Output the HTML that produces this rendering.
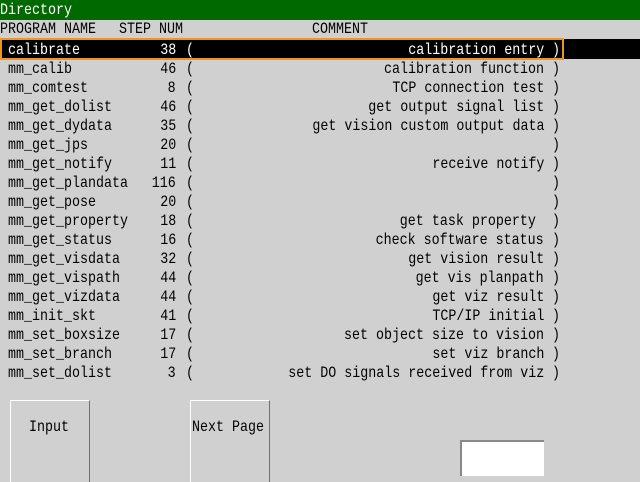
<!DOCTYPE html>
<html><head><meta charset="utf-8"><style>
body{margin:0;width:640px;height:480px;background:#d0d0d0;position:relative;overflow:hidden;font-family:"Liberation Mono",monospace;}
.r{position:absolute;left:0;width:640px;height:19px;font-size:16px;line-height:19px;}
.r span{position:absolute;top:1px;white-space:pre;}
.l{transform:scaleX(0.8333);transform-origin:0 0;}
.n{right:464px;transform:scaleX(0.8333);transform-origin:100% 0;}
.p{left:186px;transform:scaleX(0.8333);transform-origin:0 0;}
.c{right:96px;transform:scaleX(0.8333);transform-origin:100% 0;}
.q{left:552px;transform:scaleX(0.8333);transform-origin:0 0;}
.nm{left:8px}
#title{position:absolute;left:0;top:0;width:640px;height:20px;background:#006a00;}
#hl{position:absolute;left:0;top:39px;width:640px;height:20px;background:#000;}
#ob{position:absolute;left:0;top:38px;width:560px;height:18px;border:2px solid #f0961e;}
.w{color:#fff}
.btn{position:absolute;top:400px;height:82px;background:#d0d0d0;border-top:1px solid #fff;border-left:1px solid #fff;border-right:1px solid #707070;box-sizing:border-box;}
.bt{position:absolute;top:418px;white-space:pre;font-size:16px;transform:scaleX(0.8333);transform-origin:0 0;}
#box{position:absolute;left:460px;top:440px;width:84px;height:36px;background:#fff;border-top:2px solid #888;border-left:2px solid #888;box-sizing:border-box;}
</style></head><body>
<div id="title"></div>
<div class="r w" style="top:0px"><span class="l" style="left:0">Directory</span></div>
<div class="r" style="top:19px"><span class="l" style="left:0">PROGRAM NAME</span><span class="l" style="left:119px">STEP NUM</span><span class="l" style="left:312px">COMMENT</span></div>
<div id="hl"></div>
<div id="ob"></div>
<div class="r w" style="top:40px"><span class="l nm">calibrate</span><span class="n">38</span><span class="p">(</span><span class="c">calibration entry</span><span class="q">)</span></div>
<div class="r" style="top:59px"><span class="l nm">mm_calib</span><span class="n">46</span><span class="p">(</span><span class="c">calibration function</span><span class="q">)</span></div>
<div class="r" style="top:78px"><span class="l nm">mm_comtest</span><span class="n">8</span><span class="p">(</span><span class="c">TCP connection test</span><span class="q">)</span></div>
<div class="r" style="top:97px"><span class="l nm">mm_get_dolist</span><span class="n">46</span><span class="p">(</span><span class="c">get output signal list</span><span class="q">)</span></div>
<div class="r" style="top:116px"><span class="l nm">mm_get_dydata</span><span class="n">35</span><span class="p">(</span><span class="c">get vision custom output data</span><span class="q">)</span></div>
<div class="r" style="top:135px"><span class="l nm">mm_get_jps</span><span class="n">20</span><span class="p">(</span><span class="q">)</span></div>
<div class="r" style="top:154px"><span class="l nm">mm_get_notify</span><span class="n">11</span><span class="p">(</span><span class="c">receive notify</span><span class="q">)</span></div>
<div class="r" style="top:173px"><span class="l nm">mm_get_plandata</span><span class="n">116</span><span class="p">(</span><span class="q">)</span></div>
<div class="r" style="top:192px"><span class="l nm">mm_get_pose</span><span class="n">20</span><span class="p">(</span><span class="q">)</span></div>
<div class="r" style="top:211px"><span class="l nm">mm_get_property</span><span class="n">18</span><span class="p">(</span><span class="c">get task property </span><span class="q">)</span></div>
<div class="r" style="top:230px"><span class="l nm">mm_get_status</span><span class="n">16</span><span class="p">(</span><span class="c">check software status</span><span class="q">)</span></div>
<div class="r" style="top:249px"><span class="l nm">mm_get_visdata</span><span class="n">32</span><span class="p">(</span><span class="c">get vision result</span><span class="q">)</span></div>
<div class="r" style="top:268px"><span class="l nm">mm_get_vispath</span><span class="n">44</span><span class="p">(</span><span class="c">get vis planpath</span><span class="q">)</span></div>
<div class="r" style="top:287px"><span class="l nm">mm_get_vizdata</span><span class="n">44</span><span class="p">(</span><span class="c">get viz result</span><span class="q">)</span></div>
<div class="r" style="top:306px"><span class="l nm">mm_init_skt</span><span class="n">41</span><span class="p">(</span><span class="c">TCP/IP initial</span><span class="q">)</span></div>
<div class="r" style="top:325px"><span class="l nm">mm_set_boxsize</span><span class="n">17</span><span class="p">(</span><span class="c">set object size to vision</span><span class="q">)</span></div>
<div class="r" style="top:344px"><span class="l nm">mm_set_branch</span><span class="n">17</span><span class="p">(</span><span class="c">set viz branch</span><span class="q">)</span></div>
<div class="r" style="top:363px"><span class="l nm">mm_set_dolist</span><span class="n">3</span><span class="p">(</span><span class="c">set DO signals received from viz</span><span class="q">)</span></div>
<div class="btn" style="left:10px;width:80px"></div>
<div class="bt" style="left:29px">Input</div>
<div class="btn" style="left:190px;width:80px"></div>
<div class="bt" style="left:192px">Next Page</div>
<div id="box"></div>
</body></html>
